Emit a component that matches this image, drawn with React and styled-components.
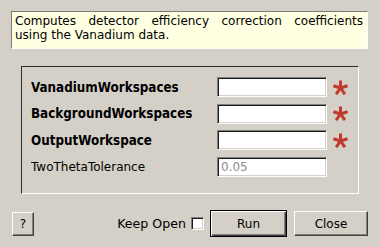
import React from "react";
import styled, { createGlobalStyle } from "styled-components";

const Global = createGlobalStyle`
  html, body { margin: 0; padding: 0; background: #d4d0c8; }
  body { font-family: "DejaVu Sans", "Liberation Sans", sans-serif; font-size: 12px; color: #000; }
`;

const Dialog = styled.div`
  width: 380px;
  height: 247px;
  box-sizing: border-box;
  background: #d4d0c8;
  display: flex;
  flex-direction: column;
  padding: 11px 12px 0 11px;
`;

const Description = styled.div`
  height: 38px;
  box-sizing: border-box;
  background: #ffffe1;
  border-style: solid;
  border-width: 1px;
  border-color: #7a7a7a #ffffff #ffffff #7a7a7a;
  padding: 2px 4px 0 3px;
  line-height: 14px;
  text-align: justify;
`;

const GroupBox = styled.div`
  margin: 17px 9px 0 10px;
  height: 128px;
  box-sizing: border-box;
  border-style: solid;
  border-width: 1px;
  border-color: #2e2e2e #ffffff #ffffff #2e2e2e;
  padding: 10px 10px 0 9px;
  display: grid;
  grid-template-columns: 1fr 110px 15px;
  column-gap: 6px;
  grid-auto-rows: 20px;
  row-gap: 6.67px;
  align-items: center;
`;

const Label = styled.div`
  font-family: ${(p) =>
    p.$mandatory ? '"DejaVu Sans Condensed", "DejaVu Sans", sans-serif' : '"DejaVu Sans", sans-serif'};
  font-stretch: ${(p) => (p.$mandatory ? "semi-condensed" : "normal")};
  font-weight: ${(p) => (p.$mandatory ? "bold" : "normal")};
  font-size: ${(p) => (p.$mandatory ? "13.3px" : "12px")};
  white-space: nowrap;
  overflow: hidden;
`;

const Field = styled.input`
  width: 110px;
  height: 20px;
  box-sizing: border-box;
  margin: 0;
  padding: 0 3px;
  background: #fff;
  border-style: solid;
  border-width: 1px;
  border-color: #808080 #ffffff #ffffff #808080;
  box-shadow: inset 1px 1px 0 #1a1a1a, inset -1px -1px 0 #d4d0c8;
  font-family: "DejaVu Sans", sans-serif;
  font-size: 12px;
  color: ${(p) => (p.$dim ? "#8c8c8c" : "#000")};
  outline: none;
`;

const Star = styled.svg`
  width: 15px;
  height: 15px;
  display: block;
`;

const Required = () => (
  <Star viewBox="0 0 15 15">
    <g stroke="#bf3a2b" strokeWidth="3" strokeLinecap="butt" fill="none">
      <line x1="7.5" y1="8" x2="7.5" y2="0.5" />
      <line x1="7.5" y1="8" x2="14.6" y2="5.7" />
      <line x1="7.5" y1="8" x2="0.4" y2="5.7" />
      <line x1="7.5" y1="8" x2="11.9" y2="14.2" />
      <line x1="7.5" y1="8" x2="3.1" y2="14.2" />
    </g>
  </Star>
);

const Empty = styled.span``;

const Footer = styled.div`
  margin-top: 16px;
  margin-left: 1px;
  display: flex;
  align-items: center;
`;

const Button = styled.button`
  box-sizing: border-box;
  width: ${(p) => p.$w}px;
  height: ${(p) => p.$h}px;
  margin: 0 0 0 ${(p) => p.$gap || 0}px;
  padding: 0;
  background: #d4d0c8;
  font-family: "DejaVu Sans", sans-serif;
  font-size: 12px;
  color: #000;
  border-style: solid;
  border-width: 1px;
  border-color: ${(p) => (p.$default ? "#000" : "#ffffff #404040 #404040 #ffffff")};
  box-shadow: ${(p) =>
    p.$default
      ? "inset 1px 1px 0 #ffffff, inset -1px -1px 0 #404040, inset -2px -2px 0 #808080"
      : "inset -1px -1px 0 #808080"};
`;

const Spacer = styled.div`
  flex: 1;
`;

const CheckLabel = styled.span`
  font-size: 12.6px;
  margin-right: 5px;
`;

const Check = styled.span`
  width: 13px;
  height: 13px;
  box-sizing: border-box;
  background: #fff;
  border-style: solid;
  border-width: 1px;
  border-color: #808080 #ffffff #ffffff #808080;
  box-shadow: inset 1px 1px 0 #1a1a1a, inset -1px -1px 0 #d4d0c8;
  margin-right: 6px;
`;

const rows = [
  { label: "VanadiumWorkspaces", req: true, value: "" },
  { label: "BackgroundWorkspaces", req: true, value: "" },
  { label: "OutputWorkspace", req: true, value: "" },
  { label: "TwoThetaTolerance", req: false, value: "0.05" },
];

export default function App() {
  return (
    <>
      <Global />
      <Dialog>
        <Description>
          Computes detector efficiency correction coefficients using the Vanadium data.
        </Description>
        <GroupBox>
          {rows.map((r) => (
            <React.Fragment key={r.label}>
              <Label $mandatory={r.req}>{r.label}</Label>
              <Field readOnly value={r.value} $dim={!r.req} />
              {r.req ? <Required /> : <Empty />}
            </React.Fragment>
          ))}
        </GroupBox>
        <Footer>
          <Button $w={22} $h={24}>?</Button>
          <Spacer />
          <CheckLabel>Keep Open</CheckLabel>
          <Check />
          <Button $w={77} $h={27} $default>Run</Button>
          <Button $w={74} $h={25} $gap={7}>Close</Button>
        </Footer>
      </Dialog>
    </>
  );
}
